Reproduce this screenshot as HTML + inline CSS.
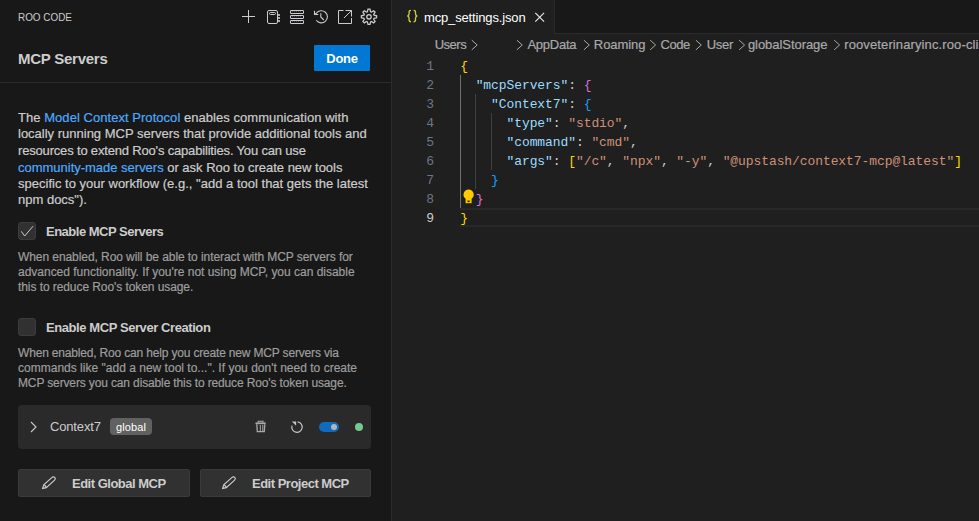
<!DOCTYPE html>
<html><head><meta charset="utf-8">
<style>
*{box-sizing:border-box;margin:0;padding:0}
html,body{width:979px;height:521px;overflow:hidden;background:#1f1f1f;font-family:"Liberation Sans",sans-serif;color:#cccccc}
.p,.d,.bc{-webkit-text-stroke:0.2px}
.a{position:absolute;white-space:pre}
#side{position:absolute;left:0;top:0;width:391px;height:521px;background:#181818}
#sash{position:absolute;left:391px;top:0;width:1px;height:521px;background:#2b2b2b}
#ed{position:absolute;left:392px;top:0;width:587px;height:521px;background:#1f1f1f}
.ico{position:absolute;top:8px;width:18px;height:18px}
.p{font-size:13px;color:#cccccc;line-height:16px}
.lnk{color:#4daafc}
.d{font-size:12px;color:#9d9d9d;line-height:15px}
.b13{font-size:13px;font-weight:bold;color:#cccccc}
.mono{font-family:"Liberation Mono",monospace;font-size:13px;letter-spacing:-0.085px;line-height:21px}
.ln{position:absolute;width:20px;text-align:right;color:#6e7681;font-family:"Liberation Mono",monospace;font-size:13px;line-height:21px}
.k{color:#9cdcfe}.s{color:#ce9178}.pu{color:#cccccc}.g{color:#ffd700}.o{color:#da70d6}.bl{color:#179fff}
.guide{position:absolute;width:1px;background:#404040}
.bc{position:absolute;white-space:pre;top:37.4px;font-size:13px;color:#a9a9a9;line-height:16px}
.chev{position:absolute;top:42px;width:6px;height:8px}
</style></head><body>
<div id="side">
  <div class="a" style="left:18px;top:11px;font-size:11px;line-height:12px;color:#cccccc;transform-origin:0 0;transform:scaleX(0.9)">ROO CODE</div>
  <!-- header icons -->
  <svg class="a" style="left:0;top:0" width="391" height="34" fill="none" stroke="#cccccc" stroke-width="1">
  <path d="M248.5 10V23M242 16.5H255"/>
  <rect x="267.5" y="10.5" width="10" height="13" rx="1.5"/>
  <rect x="269.5" y="12.5" width="6" height="2" rx="1"/>
  <path d="M279 14v2M279 17v2M279 20v2" stroke-width="1.6"/>
  <rect x="290.5" y="10.5" width="13" height="3" rx=".3"/>
  <rect x="290.5" y="15.5" width="13" height="3" rx=".3"/>
  <rect x="290.5" y="20.5" width="13" height="3" rx=".3"/>
  <path d="M292 11.6h10M292 16.6h10M292 21.6h10" stroke="#5a4a6a" stroke-dasharray="1 1"/>
  <path d="M315 14.1L316.3 13.3A6.1 6.1 0 1 1 316.3 20.3" stroke-width="1.1"/>
  <path d="M314.5 10.8V14.5H318.3" stroke-width="1.1"/>
  <path d="M320.8 13.3V17L323.8 20" stroke-width="1.1"/>
  <path d="M343.5 10.5h-5v13h13v-5.5M345.5 10.5h6v6M351.5 10.5l-7.5 7.5"/>
  <path d="M367.43 11.74 L368.00 9.16 L370.00 9.16 L370.57 11.74 L371.47 12.11 L373.69 10.70 L375.10 12.11 L373.69 14.33 L374.06 15.23 L376.64 15.80 L376.64 17.80 L374.06 18.37 L373.69 19.27 L375.10 21.49 L373.69 22.90 L371.47 21.49 L370.57 21.86 L370.00 24.44 L368.00 24.44 L367.43 21.86 L366.53 21.49 L364.31 22.90 L362.90 21.49 L364.31 19.27 L363.94 18.37 L361.36 17.80 L361.36 15.80 L363.94 15.23 L364.31 14.33 L362.90 12.11 L364.31 10.70 L366.53 12.11Z" stroke-width="1.25"/>
  <circle cx="369" cy="16.8" r="2.2" stroke-width="1.3"/>
</svg>

  <div class="a" style="left:18px;top:50px;font-size:15px;font-weight:bold;line-height:18px;letter-spacing:-0.25px">MCP Servers</div>
  <div class="a" style="left:314px;top:45px;width:56px;height:26px;background:#0078d4;border-radius:1px;color:#fff;font-size:13px;font-weight:bold;line-height:27.6px;text-align:center;letter-spacing:-0.3px">Done</div>
  <div class="a" style="left:0;top:82px;width:391px;height:1px;background:#2b2b2b"></div>

  <div class="a p" style="left:18px;top:109.5px;letter-spacing:0.045px">The <span class="lnk">Model Context Protocol</span> enables communication with</div>
  <div class="a p" style="left:18px;top:125.5px">locally running MCP servers that provide additional tools and</div>
  <div class="a p" style="left:18px;top:142.7px;letter-spacing:-0.175px">resources to extend Roo's capabilities. You can use</div>
  <div class="a p" style="left:18px;top:160px;letter-spacing:-0.013px"><span class="lnk">community-made servers</span> or ask Roo to create new tools</div>
  <div class="a p" style="left:18px;top:175.5px;letter-spacing:0.01px">specific to your workflow (e.g., "add a tool that gets the latest</div>
  <div class="a p" style="left:18px;top:192px">npm docs").</div>

  <div class="a" style="left:18px;top:222px;width:18px;height:18px;background:#313131;border:1px solid #3c3c3c;border-radius:3px"></div>
  <svg class="a" style="left:18px;top:222px" width="18" height="18" viewBox="0 0 18 18"><path d="M3.2 9.3L6.7 14L15 4.2" stroke="#cccccc" stroke-width="1" fill="none"/></svg>
  <div class="a b13" style="left:46px;top:224px;letter-spacing:-0.5px">Enable MCP Servers</div>
  <div class="a d" style="left:18px;top:250px;letter-spacing:-0.073px">When enabled, Roo will be able to interact with MCP servers for</div>
  <div class="a d" style="left:18px;top:265px;letter-spacing:-0.0125px">advanced functionality. If you're not using MCP, you can disable</div>
  <div class="a d" style="left:18px;top:280px;letter-spacing:-0.076px">this to reduce Roo's token usage.</div>

  <div class="a" style="left:18px;top:318px;width:18px;height:18px;background:#313131;border:1px solid #3c3c3c;border-radius:3px"></div>
  <div class="a b13" style="left:46px;top:320px;letter-spacing:-0.42px">Enable MCP Server Creation</div>
  <div class="a d" style="left:18px;top:346px;letter-spacing:-0.174px">When enabled, Roo can help you create new MCP servers via</div>
  <div class="a d" style="left:18px;top:361px;letter-spacing:0.011px">commands like "add a new tool to...". If you don't need to create</div>
  <div class="a d" style="left:18px;top:376px;letter-spacing:-0.136px">MCP servers you can disable this to reduce Roo's token usage.</div>

  <!-- server card -->
  <div class="a" style="left:18px;top:405px;width:353px;height:44px;background:#2a2a2a;border-radius:4px"></div>
  <svg class="a" style="left:28px;top:419px" width="12" height="16" viewBox="0 0 12 16"><path d="M3 3l5 5-5 5" stroke="#cccccc" stroke-width="1.1" fill="none"/></svg>
  <div class="a" style="left:50px;top:419px;font-size:13px;line-height:15px;color:#cccccc;letter-spacing:-0.16px">Context7</div>
  <div class="a" style="left:110px;top:418px;width:42px;height:17px;background:#616161;border-radius:4px;color:#ffffff;font-size:11px;line-height:18px;text-align:center;letter-spacing:0.1px">global</div>
  <svg class="a" style="left:0;top:0" width="391" height="521" fill="none">
    <path d="M255.5 423.3h10.2" stroke="#a8a8a8" stroke-width="1.8"/>
    <path d="M258.2 422.4v-1.2h4.8v1.2" stroke="#a8a8a8" stroke-width="1.1"/>
    <path d="M256.8 424.2l.5 7.4h7l.5-7.4" stroke="#a8a8a8" stroke-width="1.3"/>
    <path d="M260.3 425v6M262.8 425v6" stroke="#a8a8a8" stroke-width="1"/>
    <path d="M297.6 421.9A5.2 5.2 0 1 1 292 425.6" stroke="#c4c4c4" stroke-width="1.2"/>
    <path d="M291.9 421.6h4.2v4.1z" fill="#c4c4c4"/>
  </svg>
  <div class="a" style="left:319px;top:422px;width:20px;height:10px;background:#0f6cbd;border-radius:5px"></div>
  <div class="a" style="left:331px;top:424px;width:6px;height:6px;background:#b4b4b4;border-radius:50%"></div>
  <div class="a" style="left:355px;top:423px;width:8px;height:8px;background:#73c991;border-radius:50%"></div>

  <!-- buttons -->
  <div class="a" style="left:18px;top:469px;width:172px;height:28px;background:#313131;border:1px solid #3a3a3a;border-radius:2px"></div>
  <svg class="a" style="left:0;top:0" width="391" height="521" fill="none" stroke="#cccccc" stroke-width="1.15"><g transform="translate(0 0) rotate(-42 48.5 483.1)"><path d="M40.6 483.1L43.8 481.2H55A1.9 1.9 0 0 1 55 485H43.8Z"/><path d="M44.2 481.4V484.8"/></g></svg>
  <div class="a b13" style="left:72px;top:476px;letter-spacing:-0.5px">Edit Global MCP</div>
  <div class="a" style="left:200px;top:469px;width:171px;height:28px;background:#313131;border:1px solid #3a3a3a;border-radius:2px"></div>
  <svg class="a" style="left:0;top:0" width="391" height="521" fill="none" stroke="#cccccc" stroke-width="1.15"><g transform="translate(180 0) rotate(-42 48.5 483.1)"><path d="M40.6 483.1L43.8 481.2H55A1.9 1.9 0 0 1 55 485H43.8Z"/><path d="M44.2 481.4V484.8"/></g></svg>
  <div class="a b13" style="left:252px;top:476px;letter-spacing:-0.5px">Edit Project MCP</div>
</div>
<div id="sash"></div>
<div id="ed">
  <!-- tab bar, coordinates relative to ed (x-392) -->
  <div class="a" style="left:0;top:0;width:587px;height:33px;background:#181818"></div>
  <div class="a" style="left:162px;top:33px;width:425px;height:1px;background:#2b2b2b"></div>
  <div class="a" style="left:0;top:0;width:162px;height:34px;background:#1f1f1f"></div>
  <div class="a" style="left:162px;top:0;width:1px;height:34px;background:#2b2b2b"></div>
  <svg class="a" style="left:0;top:0" width="40" height="30" fill="none" stroke="#cbcb41" stroke-width="1.35"><path d="M19 10.3c-1.3 0-1.9.5-1.9 1.7v1.8c0 1.2-.6 2-1.7 2.2 1.1.2 1.7 1 1.7 2.2v1.8c0 1.2.6 1.7 1.9 1.7"/><path d="M21.6 10.3c1.3 0 1.9.5 1.9 1.7v1.8c0 1.2.6 2 1.7 2.2-1.1.2-1.7 1-1.7 2.2v1.8c0 1.2-.6 1.7-1.9 1.7"/></svg>
  <div class="a" style="left:32px;top:10px;font-size:13px;line-height:15px;color:#ffffff;letter-spacing:-0.15px">mcp_settings.json</div>
  <svg class="a" style="left:141px;top:11px" width="14" height="14"><path d="M2.3 1.8l8.8 8.8M11.1 1.8l-8.8 8.8" stroke="#e8e8e8" stroke-width="1.15"/></svg>

  <!-- breadcrumbs -->
  <div class="bc" style="left:42.7px;letter-spacing:-0.5px">Users</div>
  <div class="bc" style="left:135.4px;letter-spacing:-0.23px">AppData</div>
  <div class="bc" style="left:201.8px;letter-spacing:-0.06px">Roaming</div>
  <div class="bc" style="left:268.6px;letter-spacing:-0.45px">Code</div>
  <div class="bc" style="left:314.7px;letter-spacing:-0.25px">User</div>
  <div class="bc" style="left:355.9px;letter-spacing:-0.05px">globalStorage</div>
  <div class="bc" style="left:452.2px;letter-spacing:0.12px">rooveterinaryinc.roo-cline</div>
  <svg class="a" style="left:0;top:0" width="587" height="56"><path d="M79.8 40.2L85.2 45L79.8 49.8M124.9 40.2L130.3 45L124.9 49.8M191.9 40.2L197.3 45L191.9 49.8M258.2 40.2L263.6 45L258.2 49.8M303.9 40.2L309.3 45L303.9 49.8M347.2 40.2L352.6 45L347.2 49.8M442.2 40.2L447.6 45L442.2 49.8" stroke="#a9a9a9" stroke-width="1" fill="none"/></svg>

  <!-- line highlight line 9 -->
  <div class="a" style="left:68px;top:208px;width:519px;height:19px;border-top:2px solid #282828;border-bottom:2px solid #282828"></div>

  <!-- line numbers -->
  <div class="ln" style="left:22px;top:56px">1</div>
  <div class="ln" style="left:22px;top:75px">2</div>
  <div class="ln" style="left:22px;top:94px">3</div>
  <div class="ln" style="left:22px;top:113px">4</div>
  <div class="ln" style="left:22px;top:132px">5</div>
  <div class="ln" style="left:22px;top:151px">6</div>
  <div class="ln" style="left:22px;top:170px">7</div>
  <div class="ln" style="left:22px;top:189px">8</div>
  <div class="ln" style="left:22px;top:208px;color:#cccccc">9</div>

  <!-- indent guides -->
  <div class="guide" style="left:68px;top:75px;height:133px;background:#707070"></div>
  <div class="guide" style="left:83px;top:94px;height:95px"></div>
  <div class="guide" style="left:99px;top:113px;height:57px"></div>

  <!-- code -->
  <div class="a mono" style="left:68.2px;top:56px"><span class="g">{</span></div>
  <div class="a mono" style="left:68.2px;top:75px">  <span class="k">"mcpServers"</span><span class="pu">: </span><span class="o">{</span></div>
  <div class="a mono" style="left:68.2px;top:94px">    <span class="k">"Context7"</span><span class="pu">: </span><span class="bl">{</span></div>
  <div class="a mono" style="left:68.2px;top:113px">      <span class="k">"type"</span><span class="pu">: </span><span class="s">"stdio"</span><span class="pu">,</span></div>
  <div class="a mono" style="left:68.2px;top:132px">      <span class="k">"command"</span><span class="pu">: </span><span class="s">"cmd"</span><span class="pu">,</span></div>
  <div class="a mono" style="left:68.2px;top:151px">      <span class="k">"args"</span><span class="pu">: </span><span class="g">[</span><span class="s">"/c"</span><span class="pu">, </span><span class="s">"npx"</span><span class="pu">, </span><span class="s">"-y"</span><span class="pu">, </span><span class="s">"@upstash/context7-mcp@latest"</span><span class="g">]</span></div>
  <div class="a mono" style="left:68.2px;top:170px">    <span class="bl">}</span></div>
  <div class="a mono" style="left:68.2px;top:189px">  <span class="o">}</span></div>
  <div class="a mono" style="left:68.2px;top:208px"><span class="g">}</span></div>
  <!-- lightbulb -->
  <svg class="a" style="left:0;top:0" width="100" height="230"><path d="M76.6 189.6a5.1 5.1 0 0 0-3 9.2v1.6h6v-1.6a5.1 5.1 0 0 0-3-9.2z" fill="#ffcc00"/><path d="M73.6 200.2h6v3h-6z" fill="#ffcc00"/><rect x="75.6" y="200.6" width="2" height="1.6" fill="#1f1f1f"/></svg>
</div>
</body></html>
